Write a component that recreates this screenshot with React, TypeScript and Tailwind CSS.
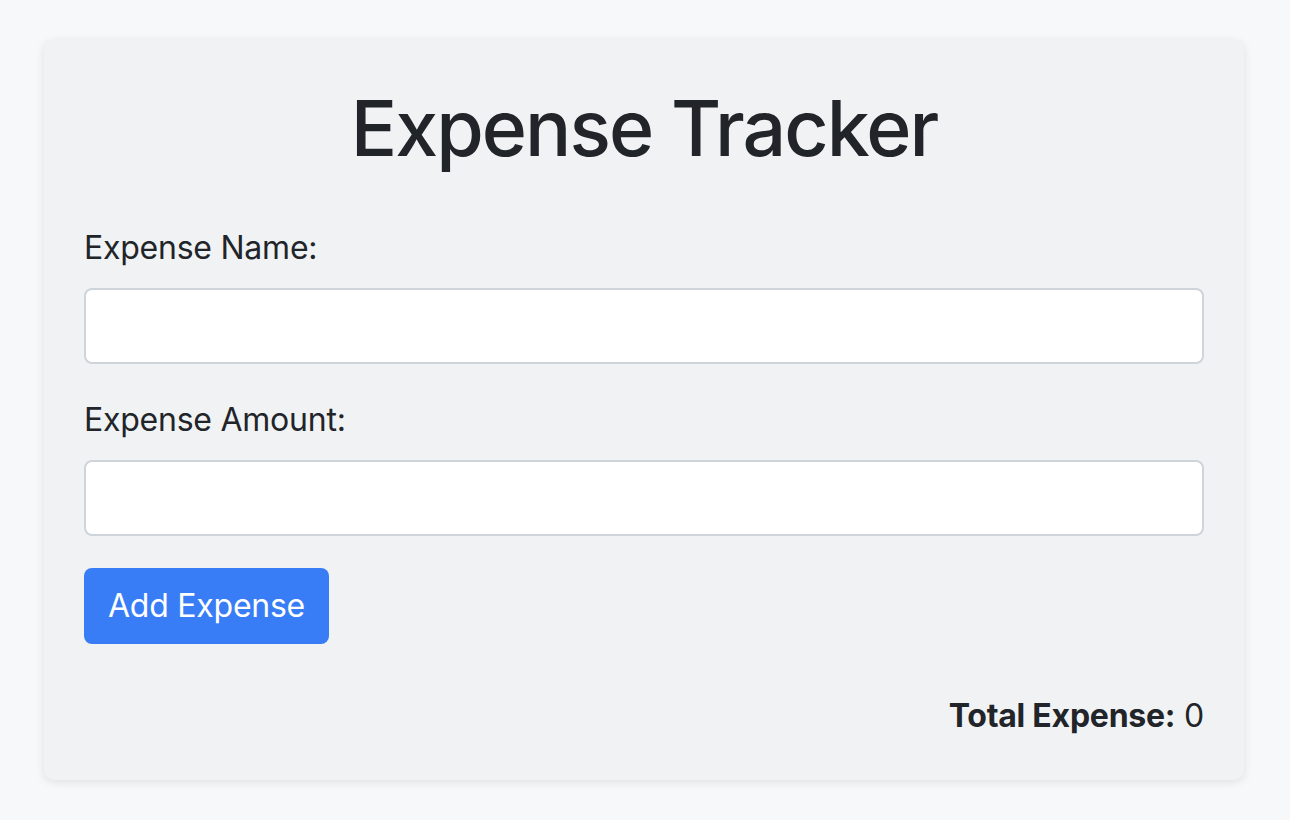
import { useState } from "react";

export default function App() {
    const [name, setName] = useState("");
    const [amount, setAmount] = useState("");
    const [total, setTotal] = useState(0);

    const handleAdd = () => {
        const value = parseFloat(amount);
        if (!name || isNaN(value)) return;
        setTotal(total + value);
        setName("");
        setAmount("");
    };

    return (
        <div
            className="min-h-screen bg-[#f7f8fa] pt-10 text-[#212529]"
            style={{ fontFamily: "Inter, 'Noto Sans', sans-serif" }}
        >
            <div className="ml-[44px] w-[1200px] rounded-[10px] bg-[#f1f2f4] p-10 tracking-[-0.015em] shadow-[0_2px_10px_rgba(0,0,0,0.1)]">
                <h1 className="mb-12 text-center text-[77px] leading-[96px] font-medium tracking-[-0.025em]">
                    Expense Tracker
                </h1>

                <div className="mb-8">
                    <label className="mb-4 block text-[32px] leading-[48px]">
                        Expense Name:
                    </label>
                    <input
                        type="text"
                        value={name}
                        onChange={(e) => setName(e.target.value)}
                        className="block h-[76px] w-full rounded-lg border-2 border-[#ced4da] bg-white px-6 text-[32px] outline-none"
                    />
                </div>

                <div className="mb-8">
                    <label className="mb-4 block text-[32px] leading-[48px]">
                        Expense Amount:
                    </label>
                    <input
                        type="number"
                        value={amount}
                        onChange={(e) => setAmount(e.target.value)}
                        className="block h-[76px] w-full rounded-lg border-2 border-[#ced4da] bg-white px-6 text-[32px] outline-none"
                    />
                </div>

                <button
                    onClick={handleAdd}
                    className="h-[76px] rounded-lg bg-[#387df6] px-6 text-[32px] text-white"
                >
                    Add Expense
                </button>

                <div className="mt-12 text-right text-[32px] leading-[48px]">
                    <span className="font-bold">Total Expense:</span> {total}
                </div>
            </div>
        </div>
    );
}
